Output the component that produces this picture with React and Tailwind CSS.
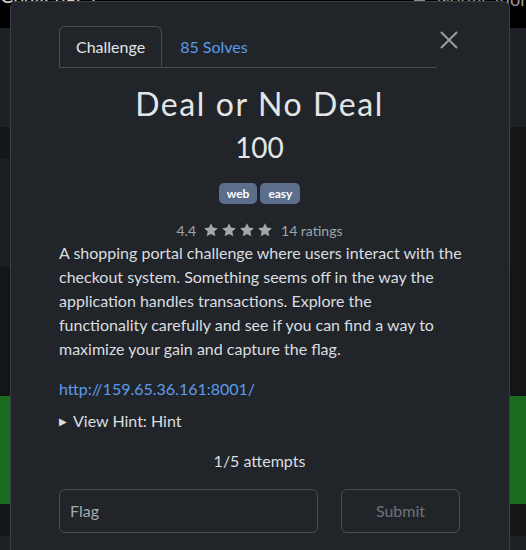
const Star = () => (
  <svg width="16" height="16" viewBox="0 0 24 24" className="fill-[#a3a6aa]">
    <path d="M12 1.8l3.1 6.6 7.2.9-5.3 5 1.4 7.1L12 17.9l-6.4 3.5 1.4-7.1-5.3-5 7.2-.9z" />
  </svg>
);

const App = () => {
  return (
    <div className="relative w-[526px] h-[550px] overflow-hidden bg-[#141618] font-['Lato','Liberation_Sans',sans-serif]">
      {/* dimmed page behind the modal */}
      <div className="h-[28px] bg-black flex justify-between overflow-hidden">
        <span className="text-[20px] leading-none -mt-[15px] text-[#cfcfcf]">Challenges</span>
        <span className="flex items-start gap-3 -mt-[10px] text-[18px] leading-none text-[#9a9a9a]">
          <span className="w-[11px] h-[12px] border-b-2 border-[#8a8a8a]" />
          <span className="-mr-3">Notifications</span>
        </span>
      </div>
      <div className="h-[99px] bg-[#1d2125]" />
      <div className="h-[32px] bg-[#141618]" />
      <div className="h-[108px] flex">
        <div className="flex-1 bg-[#1b1f22]" />
        <div className="w-[20px] bg-[#141618]" />
      </div>
      <div className="h-[129px] bg-[#131517]" />
      <div className="h-[108px] bg-[#1a6b1e]" />
      <div className="h-[32px] bg-[#141618]" />
      <div className="h-[14px] bg-[#1d2125]" />

      {/* modal */}
      <div className="absolute top-[1px] left-[10px] w-[500px] h-[600px] bg-[#212529] border border-[#3a3e43] rounded-t-[7px] px-[48px] pt-[24px]">
        <div className="flex items-start">
          <div className="w-[378px] flex border-b border-[#484c51]">
            <div className="h-[41px] px-4 flex items-center border border-b-0 border-[#484c51] rounded-t-[6px] -mb-px bg-[#212529] text-[16px] text-[#e3e5e7]">
              Challenge
            </div>
            <div className="h-[41px] px-[18px] flex items-center text-[16px] text-[#5d9bea]">85 Solves</div>
          </div>
          <svg width="18" height="18" viewBox="0 0 18 18" className="ml-[3px] mt-[5px]">
            <path d="M1 1L17 17M17 1L1 17" stroke="#9b9ea1" strokeWidth="2" />
          </svg>
        </div>

        <div className="w-[401px] flex flex-col items-center">
          <h2 className="mt-[16px] text-[32px] leading-[40px] tracking-[1.6px] text-[#e3e5e7]">Deal or No Deal</h2>
          <div className="mt-[6px] text-[28px] leading-[34px] text-[#e3e5e7]">100</div>
          <div className="mt-[19px] flex gap-[3px]">
            <span className="h-[21px] px-[8px] flex items-center rounded-[5px] bg-[#5b6e8b] text-[12px] font-bold text-white">web</span>
            <span className="h-[21px] px-[8px] flex items-center rounded-[5px] bg-[#5b6e8b] text-[12px] font-bold text-white">easy</span>
          </div>
          <div className="mt-[16px] h-[20px] flex items-center text-[14px] text-[#a0a4a8]">
            <span>4.4</span>
            <span className="ml-[7px] flex gap-[2px]">
              <Star />
              <Star />
              <Star />
              <Star />
            </span>
            <span className="ml-[8px]">14 ratings</span>
          </div>
        </div>

        <div className="w-[403px] text-[16px] leading-[24px] text-[#dadde0]">
          <p className="mt-px">
            A shopping portal challenge where users interact with the checkout system. Something seems off in the way the
            application handles transactions. Explore the functionality carefully and see if you can find a way to maximize
            your gain and capture the flag.
          </p>
          <p className="mt-[16px] text-[#5d9bea]">http://159.65.36.161:8001/</p>
          <p className="mt-[8px] flex items-center">
            <span className="text-[10px] mr-[6px]">▶</span>
            View Hint: Hint
          </p>
          <p className="mt-[16px] w-[401px] text-center">1/5 attempts</p>
          <div className="mt-[16px] w-[401px] flex justify-between">
            <div className="w-[259px] h-[44px] border border-[#4a4e53] rounded-[6px] flex items-center px-[10px] text-[#a6aaae]">
              Flag
            </div>
            <div className="w-[119px] h-[44px] border border-[#4a4e53] rounded-[6px] flex items-center justify-center text-[#6c737a]">
              Submit
            </div>
          </div>
        </div>
      </div>
    </div>
  );
};

export default App;
